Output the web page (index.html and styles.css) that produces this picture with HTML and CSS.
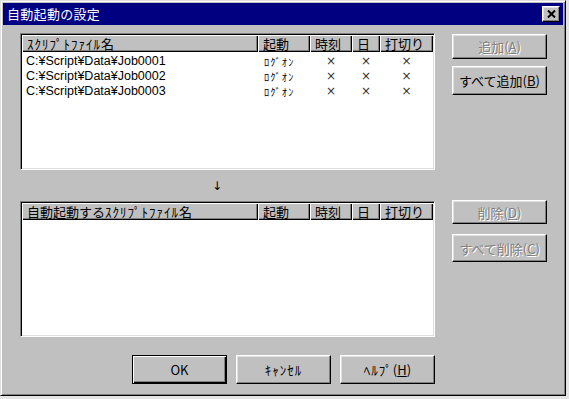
FILE: index.html
```html
<!DOCTYPE html>
<html lang="ja">
<head>
<meta charset="utf-8">
<title>自動起動の設定</title>
<link rel="stylesheet" href="styles.css">
</head>
<body>
<div class="window">
  <div class="titlebar">
    <span class="title">自動起動の設定</span>
    <div class="close">
      <svg width="9" height="8" viewBox="0 0 9 8"><path d="M1 0.5 L8 7.5 M8 0.5 L1 7.5" stroke="#000" stroke-width="2" fill="none"/></svg>
    </div>
  </div>
  <div class="client">
    <div class="listview list-top">
      <div class="lv-grid lv-header">
        <div class="hc"><span class="hk">ｽｸﾘﾌﾟﾄﾌｧｲﾙ</span>名</div>
        <div class="hc">起動</div>
        <div class="hc">時刻</div>
        <div class="hc">日</div>
        <div class="hc">打切り</div>
      </div>
      <div class="lv-body">
        <div class="lv-grid row"><div class="c-name">C:¥Script¥Data¥Job0001</div><div class="c-start">ﾛｸﾞｵﾝ</div><div class="c-x">×</div><div class="c-x">×</div><div class="c-x">×</div></div>
        <div class="lv-grid row"><div class="c-name">C:¥Script¥Data¥Job0002</div><div class="c-start">ﾛｸﾞｵﾝ</div><div class="c-x">×</div><div class="c-x">×</div><div class="c-x">×</div></div>
        <div class="lv-grid row"><div class="c-name">C:¥Script¥Data¥Job0003</div><div class="c-start">ﾛｸﾞｵﾝ</div><div class="c-x">×</div><div class="c-x">×</div><div class="c-x">×</div></div>
      </div>
    </div>
    <div class="side side-top">
      <div class="btn disabled h25">追加(<u>A</u>)</div>
      <div class="btn h29">すべて追加(<u>B</u>)</div>
    </div>
    <div class="arrow">↓</div>
    <div class="listview list-bottom">
      <div class="lv-grid lv-header">
        <div class="hc">自動起動する<span class="hk">ｽｸﾘﾌﾟﾄﾌｧｲﾙ</span>名</div>
        <div class="hc">起動</div>
        <div class="hc">時刻</div>
        <div class="hc">日</div>
        <div class="hc">打切り</div>
      </div>
      <div class="lv-body"></div>
    </div>
    <div class="side side-bottom">
      <div class="btn disabled h24">削除(<u>D</u>)</div>
      <div class="btn disabled h28">すべて削除(<u>C</u>)</div>
    </div>
    <div class="footer">
      <div class="btn default h29">OK</div>
      <div class="btn h29"><span class="hk">ｷｬﾝｾﾙ</span></div>
      <div class="btn h29"><span class="hk">ﾍﾙﾌﾟ</span>(<u>H</u>)</div>
    </div>
  </div>
</div>
</body>
</html>
```
FILE: styles.css
```css
html, body {
  margin: 0;
  padding: 0;
}
body {
  background: #e4e4e4;
  font-family: "Liberation Sans", "Noto Sans CJK JP", sans-serif;
  font-size: 12px;
  color: #000;
}
.window {
  box-sizing: border-box;
  width: 566px;
  height: 396px;
  background: #c0c0c0;
  border: 1px solid;
  border-color: #dfdfdf #000 #000 #dfdfdf;
  box-shadow: inset 1px 1px #fff, inset -1px -1px #808080;
  padding: 2px;
  display: flex;
  flex-direction: column;
}
.titlebar {
  height: 22px;
  background: #000080;
  display: flex;
  align-items: center;
  justify-content: space-between;
  padding: 0 3px 0 4px;
}
.title {
  color: #fff;
  font-family: "Noto Sans CJK JP", sans-serif;
  font-size: 13px;
  letter-spacing: 0.3px;
  line-height: 22px;
}
.close {
  box-sizing: border-box;
  width: 18px;
  height: 16px;
  background: #c0c0c0;
  border: 1px solid;
  border-color: #fff #000 #000 #fff;
  box-shadow: inset -1px -1px #808080, inset 1px 1px #dfdfdf;
  display: flex;
  align-items: center;
  justify-content: center;
}
.client {
  display: grid;
  grid-template-columns: 415px 95px;
  grid-template-rows: 137px 31px 136px auto;
  column-gap: 17px;
  padding: 8px 0 0 17px;
}
.list-top { grid-column: 1; grid-row: 1; }
.side-top { grid-column: 2; grid-row: 1; padding-top: 1px; }
.arrow {
  grid-column: 1;
  grid-row: 2;
  display: flex;
  align-items: center;
  padding-left: 192px;
  font-family: "DejaVu Sans", sans-serif;
  font-size: 12px;
}
.list-bottom { grid-column: 1; grid-row: 3; }
.side-bottom { grid-column: 2; grid-row: 3; margin-top: -1px; }
.footer {
  grid-column: 1;
  grid-row: 4;
  display: flex;
  justify-content: flex-end;
  gap: 9px;
  padding-top: 18px;
}
.side {
  display: flex;
  flex-direction: column;
}
.side-top { gap: 7px; }
.side-bottom { gap: 10px; }

.listview {
  box-sizing: border-box;
  background: #fff;
  border: 1px solid;
  border-color: #808080 #fff #fff #808080;
  box-shadow: inset 1px 1px #000, inset -1px -1px #dfdfdf;
  padding: 1px;
  overflow: hidden;
}
.lv-grid {
  display: grid;
  grid-template-columns: 236px 52px 42px 28px 53px;
}
.lv-header .hc {
  height: 17px;
  line-height: 17px;
  background: #c0c0c0;
  box-shadow: inset 1px 1px #fff, inset -1px -1px #000, inset -2px -2px #808080;
  padding-left: 5px;
  font-family: "Noto Sans CJK JP", sans-serif;
  font-size: 13px;
  white-space: nowrap;
  overflow: hidden;
}
.hk {
  letter-spacing: 1px;
}
.lv-body {
  padding-top: 2px;
}
.row {
  height: 15px;
  line-height: 15px;
}
.c-name {
  padding-left: 4px;
  white-space: nowrap;
  font-size: 12.5px;
}
.c-start {
  padding-left: 6px;
  font-family: "Noto Sans CJK JP", sans-serif;
  font-size: 10.3px;
  letter-spacing: 1.2px;
}
.c-x {
  text-align: center;
  font-family: "DejaVu Sans", sans-serif;
  font-size: 12px;
  color: #333;
}

.btn {
  box-sizing: border-box;
  width: 95px;
  background: #c0c0c0;
  border: 1px solid;
  border-color: #fff #000 #000 #fff;
  box-shadow: inset -1px -1px #808080, inset 1px 1px #dfdfdf;
  display: flex;
  align-items: center;
  justify-content: center;
  font-family: "Noto Sans CJK JP", sans-serif;
  font-size: 13px;
  white-space: nowrap;
}
.btn u { text-underline-offset: 1px; }
.h24 { height: 24px; }
.h25 { height: 25px; }
.h28 { height: 28px; }
.h29 { height: 29px; }
.disabled {
  color: #808080;
  text-shadow: 1px 1px 0 #fff;
}
.default {
  border-color: #000;
  box-shadow: inset 1px 1px #fff, inset -1px -1px #000, inset -2px -2px #808080;
}
```
